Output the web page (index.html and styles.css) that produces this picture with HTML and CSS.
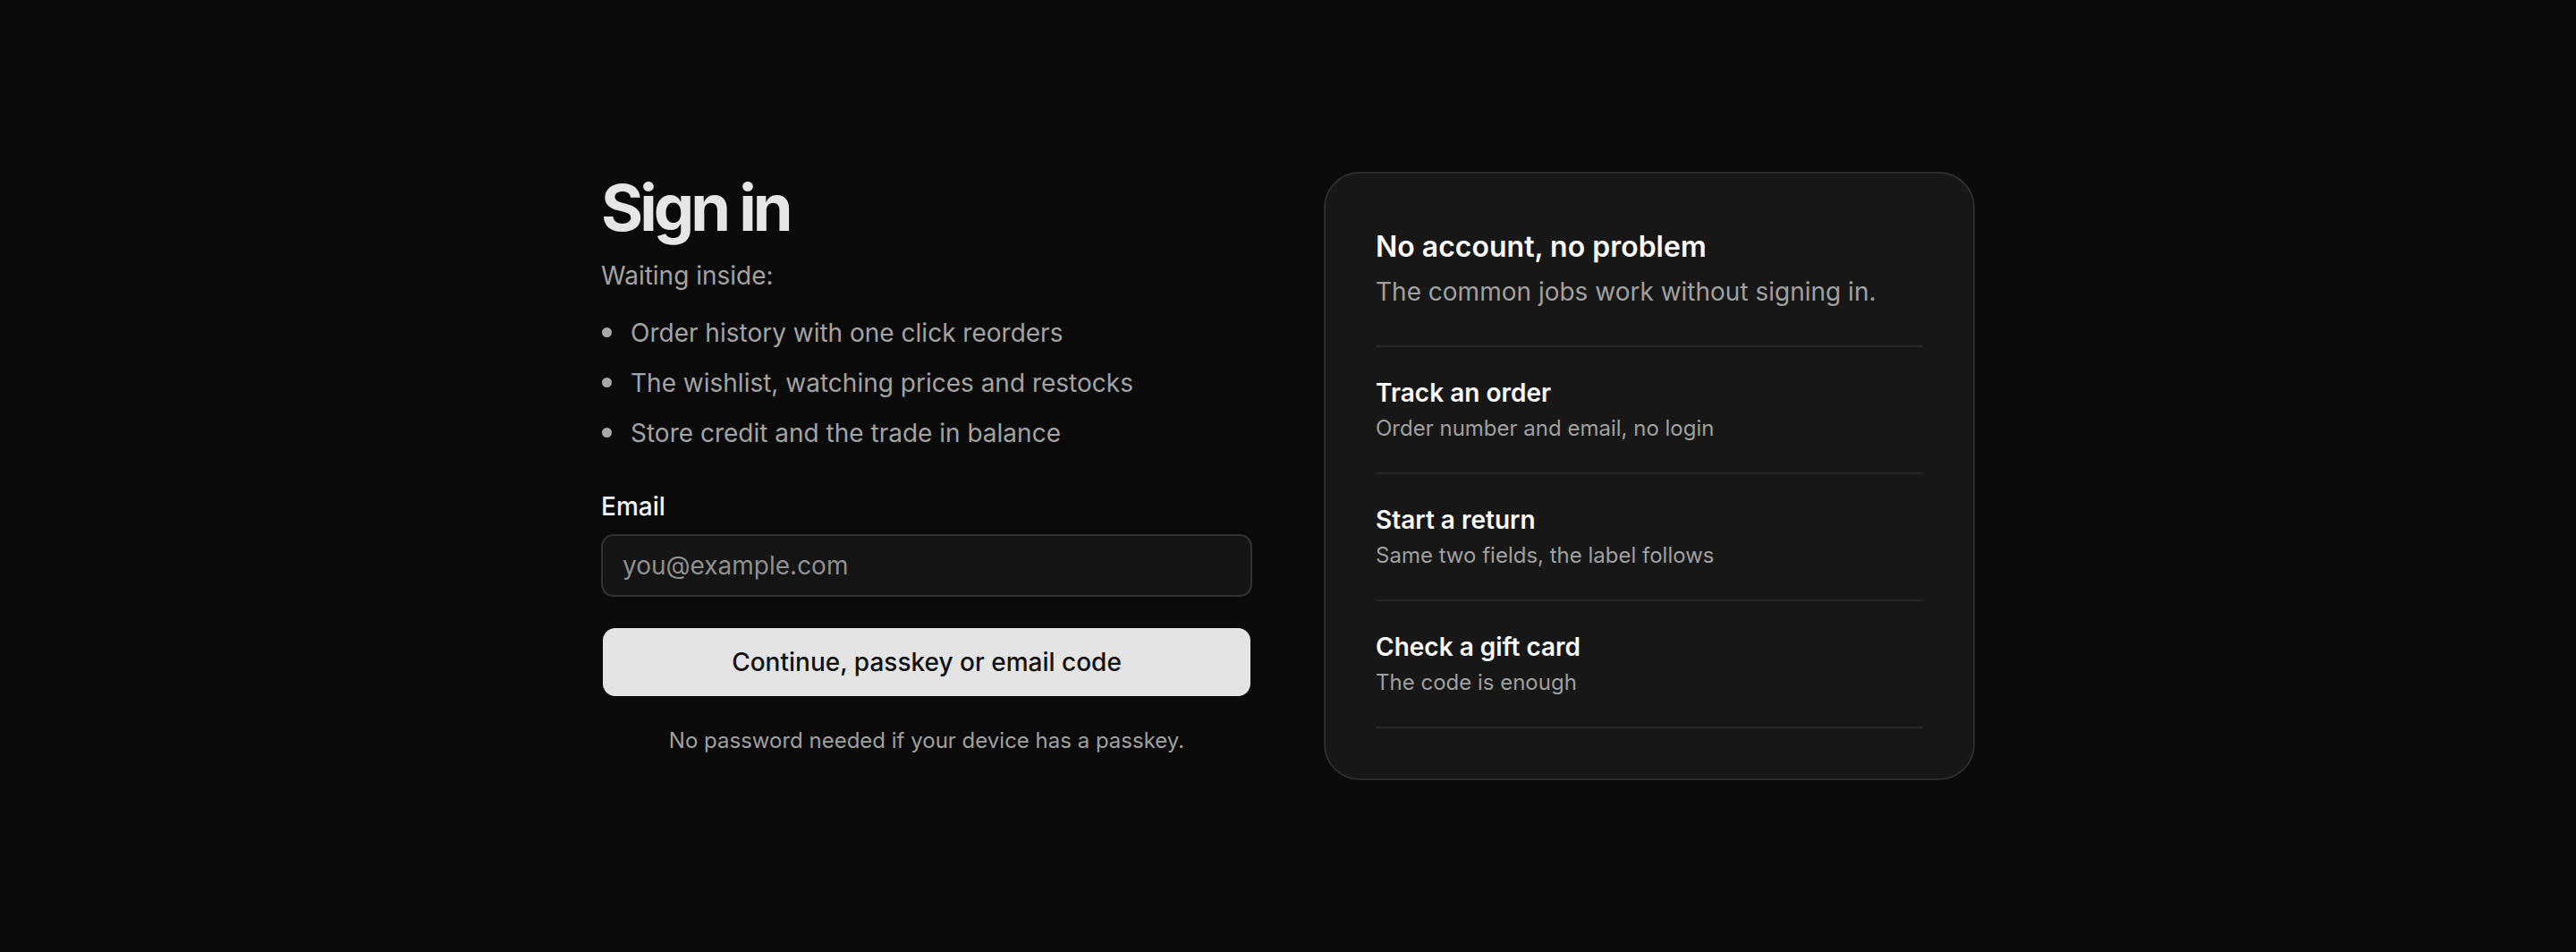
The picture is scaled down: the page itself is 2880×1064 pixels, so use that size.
FILE: index.html
```html
<!DOCTYPE html>
<html lang="en">
<head>
<meta charset="utf-8">
<title>Sign in</title>
<link rel="stylesheet" href="styles.css">
</head>
<body>
<main class="page">
  <section class="signin">
    <h1 class="title">Sign in</h1>
    <p class="intro">Waiting inside:</p>
    <ul class="perks">
      <li>Order history with one click reorders</li>
      <li>The wishlist, watching prices and restocks</li>
      <li>Store credit and the trade in balance</li>
    </ul>
    <form class="form">
      <label class="label" for="email">Email</label>
      <input class="input" id="email" type="email" placeholder="you@example.com">
      <button class="btn" type="button">Continue, passkey or email code</button>
      <p class="note">No password needed if your device has a passkey.</p>
    </form>
  </section>
  <aside class="card">
    <div class="card-head">
      <h2 class="card-title">No account, no problem</h2>
      <p class="card-sub">The common jobs work without signing in.</p>
    </div>
    <ul class="jobs">
      <li class="job">
        <div class="job-title">Track an order</div>
        <div class="job-sub">Order number and email, no login</div>
      </li>
      <li class="job">
        <div class="job-title">Start a return</div>
        <div class="job-sub">Same two fields, the label follows</div>
      </li>
      <li class="job">
        <div class="job-title">Check a gift card</div>
        <div class="job-sub">The code is enough</div>
      </li>
    </ul>
  </aside>
</main>
</body>
</html>
```

FILE: styles.css
```css
* { box-sizing: border-box; }

html, body {
  margin: 0;
  padding: 0;
  background: #0a0a0a;
}

body {
  min-height: 100vh;
  display: flex;
  align-items: center;
  justify-content: center;
  font-family: Inter, "Noto Sans", "Liberation Sans", sans-serif;
  color: #e5e5e5;
}

.page {
  width: 1536px;
  display: grid;
  grid-template-columns: 1fr 1fr;
  gap: 80px;
  align-items: start;
}

.signin {
  display: flex;
  flex-direction: column;
}

.title {
  margin: 0 0 16px;
  font-size: 72px;
  font-weight: 650;
  line-height: 1.1;
  letter-spacing: -0.055em;
  color: #e6e6e6;
}

.intro {
  margin: 0;
  font-size: 28px;
  line-height: 42px;
  color: #a3a3a3;
}

.perks {
  list-style: none;
  margin: 22px 0 0;
  padding: 0;
  display: flex;
  flex-direction: column;
  gap: 14px;
}

.perks li {
  position: relative;
  padding-left: 33px;
  font-size: 28px;
  line-height: 42px;
  color: #a3a3a3;
}

.perks li::before {
  content: "";
  position: absolute;
  left: 1px;
  top: 15px;
  width: 11px;
  height: 11px;
  border-radius: 50%;
  background: #a8a8a8;
}

.form {
  margin-top: 40px;
  display: flex;
  flex-direction: column;
}

.label {
  font-size: 28px;
  line-height: 42px;
  font-weight: 500;
  color: #f5f5f5;
  margin-bottom: 10px;
}

.input {
  height: 70px;
  padding: 0 22px;
  border: 2px solid #333333;
  border-radius: 14px;
  background: #141414;
  color: #e5e5e5;
  font-family: inherit;
  font-size: 28px;
  outline: none;
}

.input::placeholder {
  color: #8f8f8f;
}

.btn {
  margin: 35px 2px 0;
  height: 76px;
  border: 0;
  border-radius: 14px;
  background: #e4e4e4;
  color: #111111;
  font-family: inherit;
  font-size: 28px;
  font-weight: 500;
  cursor: pointer;
}

.note {
  margin: 32px 0 0;
  text-align: center;
  font-size: 24px;
  line-height: 36px;
  color: #a0a0a0;
}

.card {
  background: #171717;
  border: 2px solid #2c2c2c;
  border-radius: 40px;
  padding: 56px;
}

.card-head {
  padding-bottom: 37px;
}

.card-title {
  margin: 0;
  font-size: 32px;
  line-height: 51px;
  font-weight: 600;
  color: #fafafa;
}

.card-sub {
  margin: 3px 0 0;
  font-size: 28px;
  line-height: 45px;
  color: #a0a0a0;
}

.jobs {
  list-style: none;
  margin: 0;
  padding: 0;
  border-top: 2px solid #272727;
}

.job {
  padding: 32px 0 32px;
  border-bottom: 2px solid #272727;
}

.job-title {
  font-size: 28px;
  line-height: 39px;
  font-weight: 600;
  color: #fafafa;
}

.job-sub {
  margin-top: 3px;
  font-size: 24px;
  line-height: 34px;
  color: #a0a0a0;
}
```
